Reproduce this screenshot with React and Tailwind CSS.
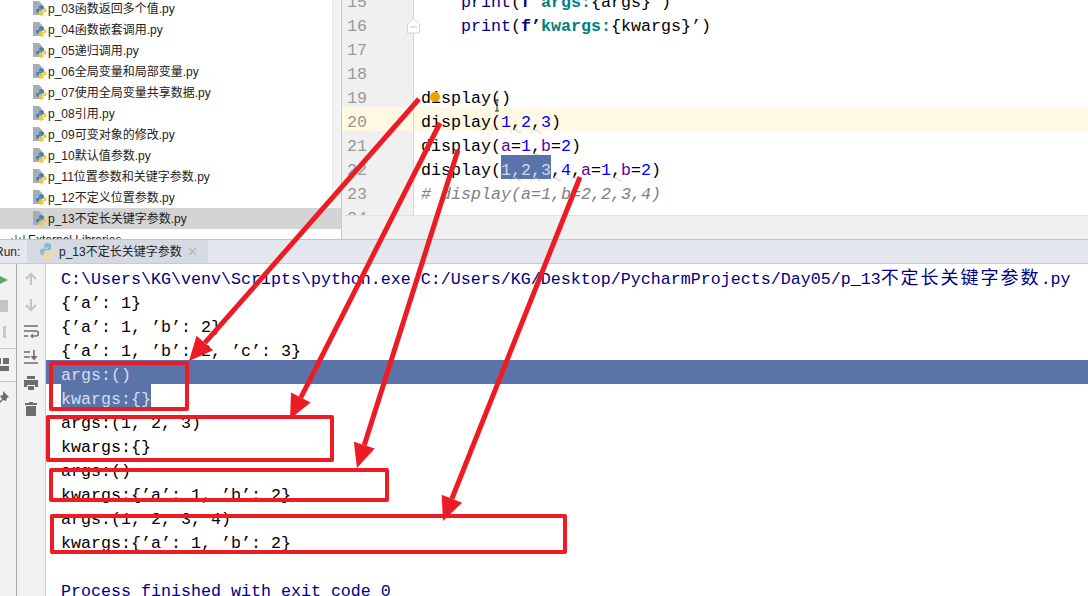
const files = [
  "p_03函数返回多个值.py",
  "p_04函数嵌套调用.py",
  "p_05递归调用.py",
  "p_06全局变量和局部变量.py",
  "p_07使用全局变量共享数据.py",
  "p_08引用.py",
  "p_09可变对象的修改.py",
  "p_10默认值参数.py",
  "p_11位置参数和关键字参数.py",
  "p_12不定义位置参数.py",
  "p_13不定长关键字参数.py",
];

const snake = "M8 1C5.6 1 5 2 5 3v2h3.5v.7H3.4C2 5.7 1 6.8 1 8.3 1 10 2 11 3.2 11h1.3V9.3C4.5 8 5.5 7 6.8 7h2.9c1 0 1.8-.8 1.8-1.8V3c0-1.2-1.2-2-3.5-2z";

function Snake({ blue, yellow }) {
  return (
    <>
      <path d={snake} fill={blue} />
      <path d={snake} fill={yellow} transform="rotate(180 8 8)" />
    </>
  );
}

function FileIcon() {
  return (
    <svg width="14" height="15" viewBox="0 0 14 15" className="shrink-0">
      <path d="M0 0h6l3 3v11H0z" fill="#a3aeb6" />
      <g transform="translate(2.4 3.6) scale(0.74)">
        <Snake blue="#3f7fb5" yellow="#fdc42e" />
      </g>
    </svg>
  );
}

function Wave({ children }) {
  return <span className="underline decoration-wavy decoration-[#c4c4c4] decoration-1 underline-offset-2">{children}</span>;
}

const N = ({ children }) => <span className="text-[#0000ff]">{children}</span>;
const P = ({ children }) => <span className="text-[#660099]">{children}</span>;

const editorLines = [
  {
    n: 15,
    code: (
      <span className="pl-10">
        <span className="text-[#000080]">print</span>(<b className="text-[#000080]">f’</b>
        <b className="text-[#008080]">args:</b>
        {"{args}"}
        <span className="text-[#000080]">’</span>)
      </span>
    ),
  },
  {
    n: 16,
    code: (
      <span className="pl-10">
        <span className="text-[#000080]">print</span>(<b className="text-[#000080]">f’</b>
        <b className="text-[#008080]">kwargs:</b>
        {"{kwargs}"}
        <span className="text-[#000080]">’</span>)
      </span>
    ),
  },
  { n: 17 },
  { n: 18 },
  { n: 19, code: "display()" },
  {
    n: 20,
    active: true,
    code: (
      <>
        display(<N>1</N>
        <Wave>,</Wave>
        <N>2</N>
        <Wave>,</Wave>
        <N>3</N>)
      </>
    ),
  },
  {
    n: 21,
    code: (
      <>
        display(<P>a</P>=<N>1</N>
        <Wave>,</Wave>
        <P>b</P>=<N>2</N>)
      </>
    ),
  },
  {
    n: 22,
    code: (
      <>
        display(
        <span className="-mt-[4px] inline-block h-6 bg-[#5a73a8] pt-[4px] text-[#cfd9ef]">
          1<Wave>,</Wave>2<Wave>,</Wave>3
        </span>
        <Wave>,</Wave>
        <N>4</N>
        <Wave>,</Wave>
        <P>a</P>=<N>1</N>
        <Wave>,</Wave>
        <P>b</P>=<N>2</N>)
      </>
    ),
  },
  { n: 23, code: <span className="italic text-[#808080]"># display(a=1,b=2,2,3,4)</span> },
  { n: 24 },
];

const consoleLines = [
  {
    cls: "text-[#000080]",
    text: (
      <>
        C:\Users\KG\venv\Scripts\python.exe C:/Users/KG/Desktop/PycharmProjects/Day05/p_13
        <span className="text-[18px] leading-none tracking-[2px]">不定长关键字参数</span>.py
      </>
    ),
  },
  { text: "{’a’: 1}" },
  { text: "{’a’: 1, ’b’: 2}" },
  { text: "{’a’: 1, ’b’: 2, ’c’: 3}" },
  { text: "args:()", sel: "full" },
  { text: "kwargs:{}", sel: "text" },
  { text: "args:(1, 2, 3)" },
  { text: "kwargs:{}" },
  { text: "args:()" },
  { text: "kwargs:{’a’: 1, ’b’: 2}" },
  { text: "args:(1, 2, 3, 4)" },
  { text: "kwargs:{’a’: 1, ’b’: 2}" },
  { text: "" },
  { cls: "text-[#000080]", text: "Process finished with exit code 0" },
];

function ToolIcon({ children }) {
  return (
    <svg width="16" height="16" viewBox="0 0 16 16">
      {children}
    </svg>
  );
}

function Arrow({ x1, y1, x2, y2 }) {
  const len = Math.hypot(x2 - x1, y2 - y1);
  const ux = (x2 - x1) / len;
  const uy = (y2 - y1) / len;
  const bx = x2 - ux * 24;
  const by = y2 - uy * 24;
  const nx = -uy * 11;
  const ny = ux * 11;
  return (
    <>
      <line x1={x1} y1={y1} x2={bx} y2={by} stroke="#ed1c24" strokeWidth="5" />
      <polygon points={`${x2},${y2} ${bx + nx},${by + ny} ${bx - nx},${by - ny}`} fill="#ed1c24" />
    </>
  );
}

export default function App() {
  return (
    <div className="relative w-[1088px] h-[596px] overflow-hidden bg-white text-black font-['Liberation_Sans','Noto_Sans_CJK_SC',sans-serif]">
      <div className="flex h-[240px] border-b border-[#c4c4c4]">
        {/* project tree */}
        <div className="relative w-[342px] shrink-0 overflow-hidden border-r border-[#c8c8c8]">
          <div className="-mt-[2px] pr-[9px]">
            {files.map((f, i) => (
              <div
                key={f}
                className={`flex h-[21px] items-center gap-[1px] pl-[33px] text-[12px] text-[#222] ${
                  i === files.length - 1 ? "bg-[#d4d4d4] -mr-[9px]" : ""
                }`}
              >
                <FileIcon />
                <span className="pt-px">{f}</span>
              </div>
            ))}
            <div className="flex h-[21px] items-center gap-[3px] pl-[11px] text-[12px] text-[#222]">
              <svg width="14" height="12" viewBox="0 0 14 12" className="shrink-0">
                <rect x="0" y="4" width="2" height="8" fill="#7cb342" />
                <rect x="4" y="1" width="2" height="11" fill="#9aa7b0" />
                <rect x="8" y="3" width="2" height="9" fill="#9aa7b0" />
                <rect x="12" y="1" width="2" height="11" fill="#40b6e0" />
              </svg>
              External Libraries
            </div>
          </div>
          <div className="absolute right-0 top-0 h-[208px] w-[9px] border-l border-[#e6e6e6] bg-[#f3f3f3]" />
        </div>

        {/* editor */}
        <div className="flex min-w-0 flex-1 flex-col overflow-hidden font-['Liberation_Mono','Noto_Sans_CJK_SC',monospace] text-[16.67px]">
          <div className="min-h-0 flex-1 overflow-hidden">
            <div className="-mt-[13px]">
              {editorLines.map((l) => (
                <div key={l.n} className={`flex h-6 whitespace-pre leading-6 ${l.active ? "bg-[#fff8e3]" : ""}`}>
                  <div
                    className={`mr-[7px] h-6 w-[72px] shrink-0 border-r border-[#d8d8d8] pl-[5px] pt-[4px] text-[#999] ${
                      l.active ? "" : "bg-[#f0f0f0]"
                    }`}
                  >
                    {l.n}
                  </div>
                  <span className="h-6 pt-[4px]">{l.code}</span>
                </div>
              ))}
            </div>
          </div>
          <div className="h-[24px] shrink-0 border-t border-[#e0e0e0] bg-[#f0f0f0]" />
        </div>
      </div>

      {/* run tab bar */}
      <div className="flex h-6 items-stretch border-b border-[#c9c9c9] bg-[#e4e7ee] text-[12px] text-[#222]">
        <span className="-ml-[5px] flex w-[32px] shrink-0 items-center">Run:</span>
        <div className="flex w-[181px] items-center bg-[#d5d9e1] pl-[13px]">
          <svg width="15" height="17" viewBox="1 1 14 14" preserveAspectRatio="none" className="shrink-0">
            <Snake blue="#8bb6d8" yellow="#f0dd93" />
          </svg>
          <span className="ml-[4px]">p_13不定长关键字参数</span>
          <svg width="9" height="9" viewBox="0 0 9 9" className="ml-[6px]">
            <path d="M1 1l7 7M8 1L1 8" stroke="#b4b8bf" strokeWidth="1.3" />
          </svg>
        </div>
      </div>

      {/* run panel */}
      <div className="flex h-[332px]">
        <div className="flex w-[17px] shrink-0 flex-col items-center border-r border-[#aaa] bg-[#f2f2f2] pt-[8px]">
          <div className="-ml-[12px] flex flex-col items-center gap-[10px]">
            <ToolIcon>
              <path d="M2 2l12 6-12 6z" fill="#59a869" />
            </ToolIcon>
            <ToolIcon>
              <rect x="2" y="2" width="12" height="12" fill="#c4c4c4" />
            </ToolIcon>
            <ToolIcon>
              <path d="M3 2h3v12H3zM9 2h3v12H9z" fill="#c9c9c9" />
            </ToolIcon>
          </div>
          <div className="mt-[8px] h-px w-full bg-[#c8c8c8]" />
          <div className="-ml-[12px] mt-[8px]">
            <ToolIcon>
              <path d="M1 1h6v6H1zM9 1h6v6H9zM1 9h14v5H1z" fill="#6e6e6e" />
            </ToolIcon>
          </div>
          <div className="mt-[8px] h-px w-full bg-[#c8c8c8]" />
          <div className="-ml-[12px] mt-[8px]">
            <ToolIcon>
              <path d="M9 1l6 6-2 1-1 3-3-1-5 5-1-1 5-5-2-3 3-1z" fill="#6e6e6e" />
            </ToolIcon>
          </div>
        </div>
        <div className="flex w-[29px] shrink-0 flex-col items-center gap-[10px] border-r border-[#ccc] bg-[#f2f2f2] pr-px pt-[7px]">
          <ToolIcon>
            <path d="M8 14V3M3 8l5-5 5 5" fill="none" stroke="#c4c4c4" strokeWidth="2" />
          </ToolIcon>
          <ToolIcon>
            <path d="M8 2v11M3 8l5 5 5-5" fill="none" stroke="#c4c4c4" strokeWidth="2" />
          </ToolIcon>
          <ToolIcon>
            <path d="M1 3h14M1 8h12a2 2 0 0 1 0 5H8M1 13h4" fill="none" stroke="#6e6e6e" strokeWidth="1.6" />
            <path d="M10 10.5v5l-3-2.5z" fill="#6e6e6e" />
          </ToolIcon>
          <ToolIcon>
            <path d="M1 3h6M1 8h6M1 14h14M11 1v8" fill="none" stroke="#6e6e6e" strokeWidth="1.6" />
            <path d="M7.5 7h7L11 11.5z" fill="#6e6e6e" />
          </ToolIcon>
          <ToolIcon>
            <path d="M4 1h8v3H4zM1 5h14v7h-3v-2H4v2H1zM5 11h6v4H5z" fill="#6e6e6e" />
          </ToolIcon>
          <ToolIcon>
            <path d="M6 1h4v1h4v2H2V2h4zM3 5h10v10H3z" fill="#6e6e6e" />
          </ToolIcon>
        </div>
        <div className="min-w-0 flex-1 overflow-hidden whitespace-pre font-['Liberation_Mono','Noto_Sans_CJK_SC',monospace] text-[16.67px]">
          {consoleLines.map((l, i) => (
            <div key={i} className={`h-6 pl-[15px] pt-[4px] leading-6 ${l.sel === "full" ? "bg-[#5a73a8]" : ""} ${l.cls || ""}`}>
              {l.sel === "text" ? (
                <span className="-mt-[4px] inline-block h-6 bg-[#5a73a8] pt-[4px] text-[#d6deee]">{l.text}</span>
              ) : l.sel === "full" ? (
                <span className="text-[#d6deee]">{l.text}</span>
              ) : (
                l.text
              )}
            </div>
          ))}
        </div>
      </div>

      {/* screenshot annotations: marker, cursor, fold mark, red boxes and arrows */}
      <svg className="pointer-events-none absolute left-0 top-0" width="1088" height="596" viewBox="0 0 1088 596">
        <path d="M407.5 33v-9l6-5 6 5v9z" fill="#fff" stroke="#d4d4d4" />
        <path d="M410 27h7" stroke="#c4c4c4" />
        <circle cx="435" cy="97" r="5" fill="#eba000" />
        <path d="M495 100h4M497 100v11M495 111h4" stroke="#222" strokeWidth="1" fill="none" />
        <g fill="none" stroke="#ed1c24" strokeWidth="4" strokeLinejoin="round">
          <rect x="51" y="363" width="136" height="46" />
          <rect x="48" y="417" width="284" height="43" />
          <rect x="51" y="470" width="336" height="30" />
          <rect x="52" y="516" width="513" height="36" />
        </g>
        <Arrow x1={419} y1={99} x2={189} y2={361} />
        <Arrow x1={440} y1={123} x2={290} y2={419} />
        <Arrow x1={458} y1={150} x2={357} y2={468} />
        <Arrow x1={580} y1={177} x2={443} y2={521} />
      </svg>
    </div>
  );
}
